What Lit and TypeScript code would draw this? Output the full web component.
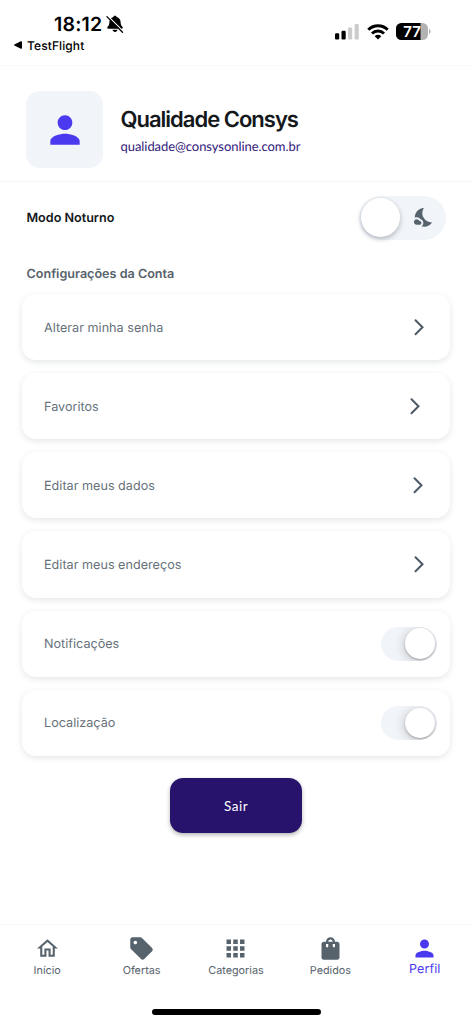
import { LitElement, html, css, svg } from "lit";
import { customElement, property } from "lit/decorators.js";

const icons: Record<string, string> = {
  person:
    "M12 12c2.21 0 4-1.79 4-4s-1.79-4-4-4-4 1.79-4 4 1.79 4 4 4zm0 2c-2.67 0-8 1.34-8 4v2h16v-2c0-2.66-5.33-4-8-4z",
  home: "M12 5.69l5 4.5V18h-2v-6H9v6H7v-7.81l5-4.5M12 3L2 12h3v8h6v-6h2v6h6v-8h3L12 3z",
  tag: "M21.41 11.58l-9-9C12.05 2.22 11.55 2 11 2H4c-1.1 0-2 .9-2 2v7c0 .55.22 1.05.59 1.42l9 9c.36.36.86.58 1.41.58.55 0 1.05-.22 1.41-.59l7-7c.37-.36.59-.86.59-1.41 0-.55-.23-1.06-.59-1.42zM6.500 8.2C5.6 8.2 4.9 7.500 4.9 6.600S5.6 5 6.500 5 8.100 5.700 8.100 6.600 7.400 8.200 6.500 8.200z",
  apps: "M4 8h4V4H4v4zm6 12h4v-4h-4v4zm-6 0h4v-4H4v4zm0-6h4v-4H4v4zm6 0h4v-4h-4v4zm6-10v4h4V4h-4zm-6 4h4V4h-4v4zm6 6h4v-4h-4v4zm0 6h4v-4h-4v4z",
  bag: "M18 6h-2c0-2.21-1.79-4-4-4S8 3.79 8 6H6c-1.1 0-2 .9-2 2v12c0 1.1.9 2 2 2h12c1.1 0 2-.9 2-2V8c0-1.1-.9-2-2-2zm-8 4c0 .55-.45 1-1 1s-1-.45-1-1V8h2v2zm2-6c1.1 0 2 .9 2 2h-4c0-1.1.9-2 2-2zm4 6c0 .55-.45 1-1 1s-1-.45-1-1V8h2v2z",
  night:
    "M11.1 12.08C8.77 7.57 10.6 3.6 11.63 2.01 6.27 2.2 1.98 6.59 1.98 12c0 .14.02.28.02.42.62-.27 1.29-.42 2-.42 1.66 0 3.18.83 4.1 2.15C9.77 14.63 11 16.17 11 18c0 1.52-.87 2.83-2.12 3.51.98.32 2.03.5 3.11.5 3.5 0 6.58-1.8 8.37-4.52-2.36.23-6.98-.97-9.26-5.41zM7 16h-.18C6.4 14.84 5.3 14 4 14c-1.66 0-3 1.34-3 3s1.34 3 3 3h3c1.1 0 2-.9 2-2s-.9-2-2-2z",
};

@customElement("md-icon")
class MdIcon extends LitElement {
  @property() name = "";
  static styles = css`
    :host { display: block; width: 27px; height: 27px; }
    .glyph { display: block; width: 100%; height: 100%; fill: currentColor; }
  `;
  render() {
    return html`<svg class="glyph" viewBox="0 0 24 24">${svg`<path d=${icons[this.name]}></path>`}</svg>`;
  }
}

@customElement("status-bar")
class StatusBar extends LitElement {
  static styles = css`
    :host { display: flex; justify-content: space-between; box-sizing: border-box; height: 65px; padding: 14px 41.500px 0 14px; color: #000; }
    .top { display: flex; align-items: center; gap: 4px; height: 20px; padding-left: 40px; }
    .time { font-size: 19.5px; font-weight: 600; letter-spacing: 0.2px; line-height: 20px; }
    .back { display: flex; align-items: center; gap: 5px; height: 16px; margin-top: 3px; font-size: 12px; font-weight: 500; letter-spacing: 0.1px; line-height: 16px; }
    .back-label { padding-top: 1px; }
    .right { display: flex; align-items: flex-start; padding-top: 9px; }
    svg { display: block; }
    .signal { margin-right: 7.5px; }
    .wifi { margin-right: 7px; }
  `;
  render() {
    return html`
      <div>
        <div class="top">
          <span class="time">18:12</span>
          <svg width="18" height="18" viewBox="0 0 18 18">
            <path d="M9 .8c-.9 0-1.500.5-1.600 1.300C4.700 2.800 3.500 4.700 3.400 7.200c-.1 2.500-.7 3.500-1.800 4.600-.6.6-.5 1.900.7 1.900h13.400c1.200 0 1.300-1.300.7-1.900-1.100-1.100-1.700-2.100-1.800-4.600C14.500 4.700 13.300 2.800 10.600 2.100 10.500 1.300 9.900.8 9 .8zM6.500 14.800h5c-.2 1.300-1.200 2.200-2.500 2.200s-2.300-.9-2.500-2.200z" />
            <path d="M2 1.200L17.200 16.400" stroke="#fff" stroke-width="1.300" />
            <path d="M.9 1.600L16.500 17.200" stroke="#000" stroke-width="1.300" stroke-linecap="round" />
          </svg>
        </div>
        <div class="back">
          <svg width="8" height="8" viewBox="0 0 8 8"><path d="M.4 3.500L6.900.3Q8 0 8 1v6Q8 8 6.900 7.700L.4 4.500Q-.2 4 .4 3.500z" /></svg>
          <span class="back-label">TestFlight</span>
        </div>
      </div>
      <div class="right">
        <svg class="signal" width="24" height="17" viewBox="0 0 24 17">
          <rect x="0" y="10.200" width="4.200" height="6.300" rx="1.200" />
          <rect x="6.500" y="7.800" width="4.200" height="8.700" rx="1.200" />
          <rect x="13" y="4.400" width="4.200" height="12.100" rx="1.200" fill="#ccc" />
          <rect x="19.600" y="1" width="4.200" height="15.500" rx="1.200" fill="#ccc" />
        </svg>
        <svg class="wifi" width="22" height="17" viewBox="0 0 22 17" fill="none" stroke="#000" stroke-width="3">
          <path d="M1.300 6.700a13.800 13.800 0 0 1 19.400 0" />
          <path d="M5 10.500a8.600 8.600 0 0 1 12 0" />
          <path d="M11 16.500L7.700 13.200a4.700 4.700 0 0 1 6.600 0z" fill="#000" stroke="none" />
        </svg>
        <svg width="35" height="17" viewBox="0 0 35 17">
          <defs><clipPath id="cell"><rect width="32" height="17" rx="5.500" /></clipPath></defs>
          <g clip-path="url(#cell)">
            <rect width="32" height="17" fill="#b2b2b2" />
            <rect width="24.500" height="17" fill="#000" />
          </g>
          <path d="M33 5.800q1.600.8 1.600 2.700T33 11.200z" fill="#b2b2b2" />
          <text x="16" y="13.900" text-anchor="middle" font-size="15" font-weight="600" fill="#fff">77</text>
        </svg>
      </div>
    `;
  }
}

@customElement("setting-card")
class SettingCard extends LitElement {
  @property() label = "";
  @property({ type: Boolean }) toggle = false;
  @property({ type: Number }) inset = 27;
  static styles = css`
    :host { display: flex; align-items: center; justify-content: space-between; box-sizing: border-box; height: 66.15px; padding-left: 22px; border-radius: 14px; background: #fff; box-shadow: 0 2px 6px rgba(50, 65, 75, 0.13); }
    .label { font-size: 12.600px; line-height: 18px; padding-top: 3px; letter-spacing: 0.02px; color: #66717a; }
    .chevron { display: block; fill: none; stroke: #4d5a66; stroke-width: 2; stroke-linecap: round; stroke-linejoin: miter; }
    .track { display: flex; justify-content: flex-end; align-items: center; box-sizing: border-box; width: 56px; height: 34px; padding-right: 2px; margin-right: 13px; border-radius: 17px; background: #f1f4f9; overflow: hidden; }
    .knob { width: 30.500px; height: 30.500px; border-radius: 50%; background: #fff; box-shadow: 0 1px 2px rgba(0, 0, 0, 0.25), -1px 2px 11px rgba(0, 0, 0, 0.2); }
  `;
  render() {
    return html`
      <span class="label">${this.label}</span>
      ${this.toggle
        ? html`<div class="track"><div class="knob"></div></div>`
        : html`<svg class="chevron" style="margin-right:${this.inset}px" width="10" height="18" viewBox="0 0 10 18"><path d="M1.500 2.300L8.500 9.300L1.500 16.300" /></svg>`}
    `;
  }
}

@customElement("app-root")
class AppRoot extends LitElement {
  static styles = css`
    :host { display: flex; flex-direction: column; width: 100%; height: 1024px; overflow: hidden; background: #fff; font-family: Inter, "Liberation Sans", sans-serif; text-rendering: geometricPrecision; color: #14181b; }
    .profile { display: flex; align-items: center; gap: 17.500px; box-sizing: border-box; height: 117px; padding: 12.500px 26px 0; border-top: 1px solid #f9f9f9; border-bottom: 1px solid #f6f6f6; }
    .avatar { display: grid; place-items: center; width: 77px; height: 77px; border-radius: 14px; background: #f1f4f8; color: #4b39ef; }
    .avatar-icon { width: 44px; height: 44px; }
    .name { padding-top: 1px; font-size: 22px; line-height: 28px; font-weight: 600; letter-spacing: -1px; white-space: nowrap; }
    .email { margin-top: 3px; font-family: Lato, sans-serif; font-size: 13px; line-height: 18px; letter-spacing: -0.06px; color: #33207c; white-space: nowrap; }
    .mode { display: flex; align-items: center; justify-content: space-between; height: 71px; padding: 0 26.500px; }
    .mode-label { font-size: 12.600px; font-weight: 600; line-height: 18px; padding-top: 3px; }
    .switch { display: flex; align-items: center; justify-content: space-between; box-sizing: border-box; width: 86.500px; height: 44px; padding: 0 10.500px 0 2px; border-radius: 22px; background: #f1f4f8; color: #57636c; }
    .switch-knob { width: 39px; height: 39px; border-radius: 50%; background: #fff; box-shadow: 0 2px 5px rgba(20, 35, 55, 0.3); }
    .switch-icon { width: 22.500px; height: 22.500px; }
    .section { padding: 13px 26.500px 10px; font-size: 12.600px; line-height: 18px; font-weight: 600; color: #57636c; }
    .list { display: flex; flex-direction: column; gap: 13px; padding: 0 22px; }
    .logout { align-self: center; box-sizing: border-box; width: 132px; height: 55px; margin-top: 22px; border: 0; border-radius: 13px; background: #27136c; color: #fff; font-family: Lato, sans-serif; font-size: 13.500px; letter-spacing: 0.5px; padding: 2px 0 0; box-shadow: 0 2px 4px rgba(0, 0, 0, 0.3); }
    .nav { display: grid; grid-template-columns: repeat(5, 1fr); height: 75px; margin-top: auto; padding-top: 10px; border-top: 1px solid #f9f9f9; box-sizing: border-box; }
    .tab { display: flex; flex-direction: column; align-items: center; color: #57636c; }
    .tab-label { margin-top: 1px; font-size: 10.800px; line-height: 16px; }
    .home { width: 25px; height: 25px; margin: 1px; }
    .active { color: #4b39ef; }
    .active .tab-label { margin-top: 0; font-size: 12.500px; letter-spacing: 0.1px; }
    .indicator { align-self: center; width: 169px; height: 5.500px; margin: 10px 0 9.500px; border-radius: 3px; background: #000; }
  `;
  render() {
    const tab = (icon: string, label: string, extra = "") => html`
      <div class="tab ${extra}"><md-icon class=${icon} name=${icon}></md-icon><span class="tab-label">${label}</span></div>`;
    return html`
      <status-bar></status-bar>
      <header class="profile">
        <div class="avatar"><md-icon class="avatar-icon" name="person"></md-icon></div>
        <div>
          <div class="name">Qualidade Consys</div>
          <div class="email">qualidade@consysonline.com.br</div>
        </div>
      </header>
      <div class="mode">
        <span class="mode-label">Modo Noturno</span>
        <div class="switch"><div class="switch-knob"></div><md-icon class="switch-icon" name="night"></md-icon></div>
      </div>
      <div class="section">Configurações da Conta</div>
      <main class="list">
        <setting-card label="Alterar minha senha" .inset=${26.5}></setting-card>
        <setting-card label="Favoritos" .inset=${29.8}></setting-card>
        <setting-card label="Editar meus dados" .inset=${27.2}></setting-card>
        <setting-card label="Editar meus endereços" .inset=${25.6}></setting-card>
        <setting-card label="Notificações" toggle></setting-card>
        <setting-card label="Localização" toggle></setting-card>
      </main>
      <button class="logout">Sair</button>
      <nav class="nav">
        ${tab("home", "Início")}${tab("tag", "Ofertas")}${tab("apps", "Categorias")}${tab("bag", "Pedidos")}${tab("person", "Perfil", "active")}
      </nav>
      <div class="indicator"></div>
    `;
  }
}
